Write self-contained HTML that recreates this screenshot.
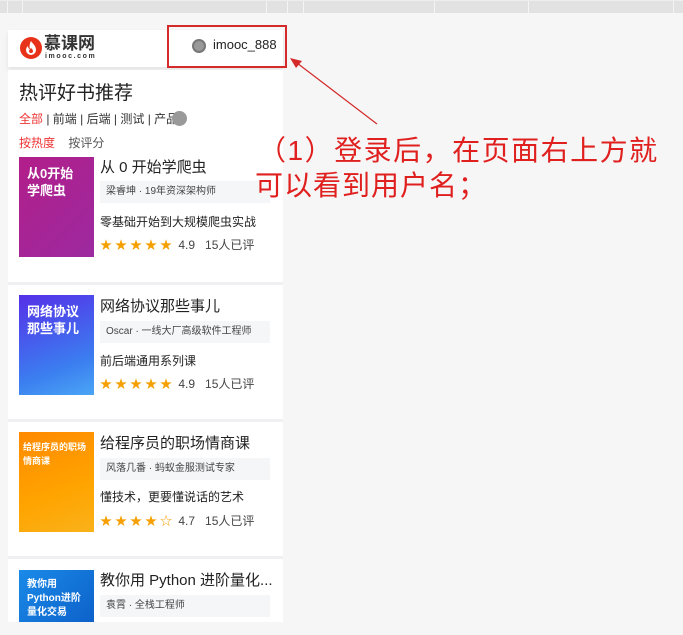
<!DOCTYPE html>
<html><head><meta charset="utf-8"><style>
*{margin:0;padding:0;box-sizing:border-box}
body{width:683px;height:635px;overflow:hidden;background:#f6f6f7;font-family:"Liberation Sans","Noto Sans CJK SC",sans-serif;position:relative;color:#222}
.topbar{position:absolute;left:0;top:0;width:683px;height:13px;background:#e2e2e2;border-top:1px solid #eee}
.topbar i{position:absolute;top:0;width:1px;height:13px;background:#f4f4f4}
.abs{position:absolute}
.hdr{left:8px;top:30px;width:275px;height:37px;background:#fff;box-shadow:0 3px 5px rgba(0,0,0,.08)}
.card{left:8px;top:70px;width:275px;height:552px;background:#fff}
.item{position:absolute;left:8px;width:275px;background:#fff}
.cov{position:absolute;left:11px;width:75px;height:100px;color:#fff;font-weight:bold;font-size:13px;line-height:17px;padding:8px 0 0 8px;overflow:hidden;white-space:nowrap}
.t{position:absolute;left:92px;font-size:15px;color:#222;white-space:nowrap}
.tag{position:absolute;left:92px;width:170px;height:22px;background:#f5f6f8;font-size:10px;color:#444;line-height:22px;padding-left:6px;white-space:nowrap}
.d{position:absolute;left:92px;font-size:12px;color:#222}
.st{position:absolute;left:92px;font-size:12px;color:#444;white-space:nowrap}
.st b{color:#f5a000;font-size:12px;letter-spacing:3px;font-weight:normal}
.sep{position:absolute;left:8px;width:275px;height:3px;background:#f0f0f2}
</style></head><body>
<div class="topbar"><i style="left:7px"></i><i style="left:22px"></i><i style="left:266px"></i><i style="left:287px"></i><i style="left:303px"></i><i style="left:434px"></i><i style="left:528px"></i><i style="left:673px"></i></div>
<div class="abs hdr"></div>
<svg class="abs" style="left:19px;top:36px" width="24" height="24" viewBox="0 0 24 24"><circle cx="12" cy="12" r="11" fill="#e8331b"/><path d="M12 5c2 3 5 5 5 9a5 5 0 0 1-10 0c0-2 1-3 2-4 0 2 1 3 2 3-1-3 0-6 1-8z" fill="#fff"/><path d="M12 12c1 1 2 2 2 3a2 2 0 0 1-4 0c0-1 1-2 2-3z" fill="#e8331b"/></svg>
<div class="abs" style="left:44px;top:35px;font-size:17px;font-weight:bold;color:#333;line-height:18px">慕课网</div>
<div class="abs" style="left:45px;top:53px;font-size:7px;letter-spacing:1.6px;color:#333;font-weight:bold">imooc.com</div>
<div class="abs" style="left:192px;top:39px;width:14px;height:14px;border-radius:50%;background:#999;border:2px solid #777"></div>
<div class="abs" style="left:213px;top:37px;font-size:13px;color:#222">imooc_888</div>
<div class="abs" style="left:167px;top:25px;width:120px;height:43px;border:2px solid #d42a2a"></div>
<div class="abs card"></div>
<div class="abs" style="left:19px;top:78px;font-size:19px;color:#222">热评好书推荐</div>
<div class="abs" style="left:19px;top:110px;font-size:12px;color:#333"><span style="color:#e33">全部</span> | 前端 | 后端 | 测试 | 产品</div>
<div class="abs" style="left:172px;top:111px;width:15px;height:15px;border-radius:50%;background:#9a9a9a"></div>
<div class="abs" style="left:19px;top:134px;font-size:12px;color:#555"><span style="color:#e33">按热度</span>&nbsp;&nbsp;&nbsp;&nbsp;按评分</div>

<div class="item" style="top:150px;height:132px">
<div class="cov" style="top:7px;background:linear-gradient(135deg,#b21e8a,#9c2aa0)">从0开始<br>学爬虫</div>
<div class="t" style="top:6px">从 0 开始学爬虫</div>
<div class="tag" style="top:31px">梁睿坤 · 19年资深架构师</div>
<div class="d" style="top:63px">零基础开始到大规模爬虫实战</div>
<div class="st" style="top:86px"><b>★★★★★</b>&nbsp;4.9&nbsp;&nbsp;&nbsp;15人已评</div>
</div>
<div class="sep" style="top:282px"></div>
<div class="item" style="top:285px;height:134px">
<div class="cov" style="top:10px;background:linear-gradient(160deg,#5530e8,#3b7ef0 70%,#4aa6f5)">网络协议<br>那些事儿</div>
<div class="t" style="top:10px">网络协议那些事儿</div>
<div class="tag" style="top:36px">Oscar · 一线大厂高级软件工程师</div>
<div class="d" style="top:67px">前后端通用系列课</div>
<div class="st" style="top:90px"><b>★★★★★</b>&nbsp;4.9&nbsp;&nbsp;&nbsp;15人已评</div>
</div>
<div class="sep" style="top:419px"></div>
<div class="item" style="top:422px;height:134px">
<div class="cov" style="top:10px;background:linear-gradient(160deg,#ff8a00,#ffa400 60%,#f9b21a);font-size:9px;line-height:14px;padding-left:4px">给程序员的职场<br>情商课</div>
<div class="t" style="top:10px">给程序员的职场情商课</div>
<div class="tag" style="top:36px">风落几番 · 蚂蚁金服测试专家</div>
<div class="d" style="top:66px">懂技术，更要懂说话的艺术</div>
<div class="st" style="top:90px"><b>★★★★☆</b>&nbsp;4.7&nbsp;&nbsp;&nbsp;15人已评</div>
</div>
<div class="sep" style="top:556px"></div>
<div class="item" style="top:559px;height:63px;overflow:hidden">
<div class="cov" style="top:11px;height:60px;background:linear-gradient(135deg,#1a8ae8,#0c5fc8);font-size:10px;line-height:14px">教你用<br>Python进阶<br>量化交易</div>
<div class="t" style="top:10px">教你用 Python 进阶量化...</div>
<div class="tag" style="top:36px">袁霄 · 全栈工程师</div>
</div>

<svg class="abs" style="left:0;top:0" width="683" height="635"><line x1="377" y1="124" x2="297" y2="63" stroke="#d42a2a" stroke-width="1.2"/><polygon points="290,58 302,61 296,68" fill="#d42a2a"/></svg>
<div class="abs" style="left:258px;top:133px;font-size:28px;color:#e0201e;line-height:36px;white-space:nowrap;letter-spacing:1.5px">（1）登录后，在页面右上方就</div>
<div class="abs" style="left:255px;top:168px;font-size:28px;color:#e0201e;line-height:36px;white-space:nowrap;letter-spacing:1px">可以看到用户名；</div>
</body></html>
